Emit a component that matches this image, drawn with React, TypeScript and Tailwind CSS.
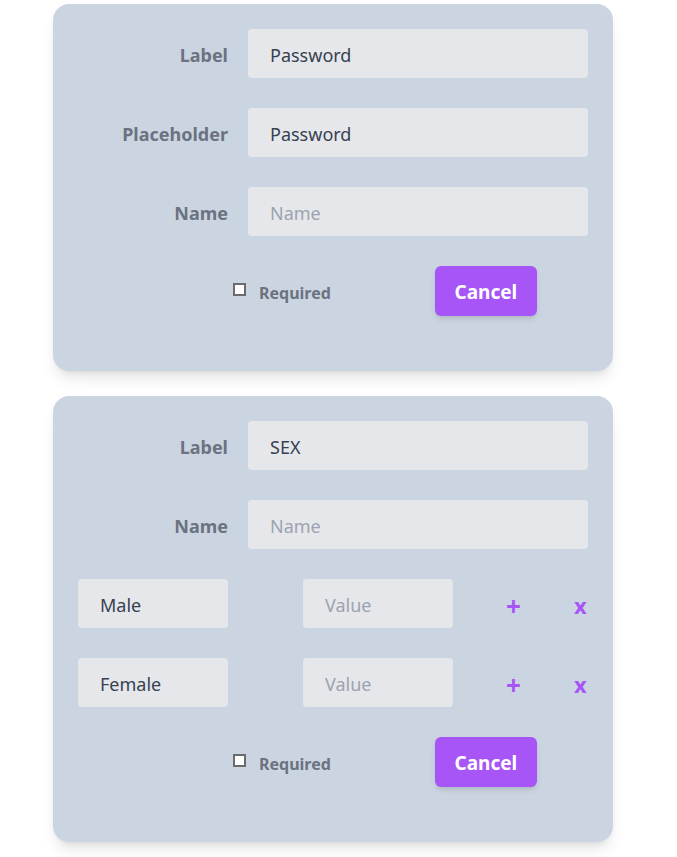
import React from "react";

const font = { fontFamily: '"Noto Sans", "Open Sans", sans-serif' };

function Field({ label, value, placeholder }: { label: string; value?: string; placeholder: string }) {
  return (
    <div className="flex items-center h-[49px]">
      <div className="w-[170px] pr-[20px] pt-[3px] text-right text-[18px] font-bold text-[#6b7280]">{label}</div>
      <input
        readOnly
        defaultValue={value}
        placeholder={placeholder}
        className="w-[340px] h-[49px] rounded bg-[#e5e7eb] pl-[22px] pt-[2px] text-[18px] text-[#374151] placeholder:text-[#9ca3af] outline-none"
      />
    </div>
  );
}

function Option({ value }: { value: string }) {
  return (
    <div className="flex items-center h-[49px]">
      <input
        readOnly
        defaultValue={value}
        className="w-[150px] h-[49px] rounded bg-[#e5e7eb] pl-[22px] pt-[2px] text-[18px] text-[#374151] outline-none"
      />
      <input
        readOnly
        placeholder="Value"
        className="ml-[75px] w-[150px] h-[49px] rounded bg-[#e5e7eb] pl-[22px] pt-[2px] text-[18px] text-[#374151] placeholder:text-[#9ca3af] outline-none"
      />
      <span className="ml-[53px] mt-[4px] w-[14px] text-[26px] font-bold text-[#a855f7] leading-none text-center">+</span>
      <span className="ml-[54px] mt-[2px] text-[22px] font-bold text-[#a855f7] leading-none">x</span>
    </div>
  );
}

function Footer() {
  return (
    <div className="flex items-center h-[50px]">
      <label className="ml-[155px] flex items-center">
        <span className="w-[13px] h-[13px] bg-white border-2 border-[#6b6b6b] inline-block -mt-[4px]" />
        <span className="ml-[13px] pt-[3px] text-[16px] font-bold text-[#6b7280]">Required</span>
      </label>
      <button className="ml-[104px] w-[102px] h-[50px] rounded-md bg-[#a855f7] pt-[2px] text-white text-[19px] font-bold shadow-md">
        Cancel
      </button>
    </div>
  );
}

export default function App() {
  return (
    <div className="min-h-screen bg-white pt-[4px] pb-[15px]" style={font}>
      <div className="ml-[53px] w-[560px] rounded-2xl bg-[#cbd5e1] shadow-lg px-[25px] pt-[25px] pb-[55px] flex flex-col gap-[30px]">
        <Field label="Label" value="Password" placeholder="Label" />
        <Field label="Placeholder" value="Password" placeholder="Placeholder" />
        <Field label="Name" placeholder="Name" />
        <Footer />
      </div>
      <div className="mt-[25px] ml-[53px] w-[560px] rounded-2xl bg-[#cbd5e1] shadow-lg px-[25px] pt-[25px] pb-[55px] flex flex-col gap-[30px]">
        <Field label="Label" value="SEX" placeholder="Label" />
        <Field label="Name" placeholder="Name" />
        <Option value="Male" />
        <Option value="Female" />
        <Footer />
      </div>
    </div>
  );
}
